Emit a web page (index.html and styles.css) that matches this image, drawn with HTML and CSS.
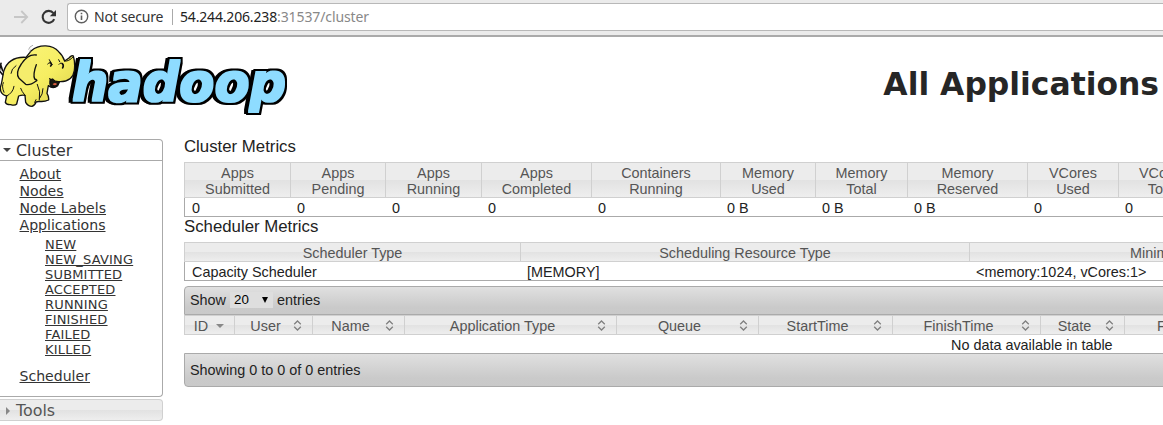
FILE: index.html
```html
<!DOCTYPE html>
<html lang="en">
<head>
<meta charset="utf-8">
<title>All Applications</title>
<link rel="stylesheet" href="styles.css">
</head>
<body>
<svg class="defs" width="0" height="0">
  <symbol id="sort" viewBox="0 0 9 11"><path d="M1.2 4.2 4.5 1 7.8 4.2M1.2 6.8 4.5 10 7.8 6.8" fill="none" stroke="#808080" stroke-width="1.3"/></symbol>
</svg>
<div class="browser">
  <svg class="forward" width="16" height="16" viewBox="0 0 16 16"><path d="M1 8H14M8.3 2 14.2 8 8.3 14" fill="none" stroke="#c6c6c6" stroke-width="1.8"/></svg>
  <svg class="reload" width="16" height="16" viewBox="0 0 16 16"><path d="M13.2 10.2A6 6 0 1 1 12.4 4.2" fill="none" stroke="#333" stroke-width="2.1"/><path d="M15 1V7.2H8.8Z" fill="#333"/></svg>
  <div class="address">
    <svg width="15" height="15" viewBox="0 0 15 15"><circle cx="7.5" cy="7.5" r="6.2" fill="none" stroke="#5f5f5f" stroke-width="1.4"/><path d="M7.5 6.4V11M7.5 3.7V5.3" stroke="#5f5f5f" stroke-width="1.6"/></svg>
    <span class="secure">Not secure</span>
    <span class="divider"></span>
    <span class="host">54.244.206.238</span><span class="path">:31537/cluster</span>
  </div>
</div>
<header class="banner">
  <svg class="logo" width="295" height="80" viewBox="0 0 295 80">
    <defs>
      <linearGradient id="skin" x1="0" y1="0" x2="1" y2="1"><stop offset="0" stop-color="#fbf580"/><stop offset=".55" stop-color="#f6ee62"/><stop offset="1" stop-color="#d8cc48"/></linearGradient>
      <filter id="block" x="-5%" y="-20%" width="110%" height="140%" color-interpolation-filters="sRGB">
        <feMorphology in="SourceGraphic" operator="dilate" radius="1" result="face"/>
        <feMorphology in="SourceAlpha" operator="dilate" radius="3" result="edge"/>
        <feMorphology in="SourceAlpha" operator="dilate" radius="2" result="inner"/>
        <feOffset in="inner" dx="-3" dy="0" result="side"/>
        <feMerge><feMergeNode in="side"/><feMergeNode in="edge"/><feMergeNode in="face"/></feMerge>
      </filter>
    </defs>
    <text class="word" x="72" y="62.5" textLength="214" lengthAdjust="spacingAndGlyphs">hadoop</text>
    <g transform="scale(.3333)" stroke="#111" stroke-width="4" stroke-linejoin="round" stroke-linecap="round">
      <path d="M78 58C42 56 20 72 11 100C7 120 6 135 1 148C0 162 8 171 20 174L16 193Q20 201 32 200Q45 204 50 198L56 174Q66 170 75 172L77 193Q84 205 96 205Q106 201 108 192L118 190Q132 192 146 186Q147 175 141 166L145 143Q160 154 173 143L178 131C204 132 220 119 223 98Q226 74 220 54Q216 50 207 60L194 69Q188 51 176 41C158 20 119 17 94 38Z" fill="url(#skin)"/>
      <path d="M109 51C89 48 75 61 64 78C53 94 47 108 57 121Q67 130 77 139C91 144 103 133 110 128Q113 126 104 123C98 110 105 91 109 80" fill="#f5ed6c"/>
      <path d="M149 122Q153 126 158 123Q163 132 178 131Q172 148 154 145Q147 137 151 124" fill="#1a1a10"/>
      <path d="M158 139Q165 131 171 138Q166 145 158 139" fill="#d95d42" stroke="none"/>
      <path d="M143 78Q151 69 157 80M177 79Q184 69 190 82M151 71 148 65M179 71 176 65M194 69Q206 72 220 56M75 172Q65 160 62 151M112 139Q123 160 118 186M129 152Q129 169 119 181M20 174Q39 165 42 145M33 106Q34 92 48 83M104 193 108 185M10 134Q4 145 12 163" fill="none" stroke-width="3"/>
      <path d="M187 77Q192 82 188 90M151 73Q157 79 152 84M3 76-2 98 8 110M2 80 8 98" fill="none" stroke-width="5"/>
      <path d="M86 34Q88 25 98 22M90 42 91 36" fill="none" stroke="#888" stroke-width="2"/>
    </g>
  </svg>
  <h1>All Applications</h1>
</header>
<main class="layout">
  <nav class="sidebar">
    <h3 class="section open"><i class="caret down"></i>Cluster</h3>
    <div class="links">
      <a>About</a><a>Nodes</a><a>Node Labels</a><a>Applications</a>
      <div class="states"><a>NEW</a><a>NEW_SAVING</a><a>SUBMITTED</a><a>ACCEPTED</a><a>RUNNING</a><a>FINISHED</a><a>FAILED</a><a>KILLED</a></div>
      <a>Scheduler</a>
    </div>
    <h3 class="section closed"><i class="caret right"></i>Tools</h3>
  </nav>
  <section class="content">
    <h2>Cluster Metrics</h2>
    <div class="grid metrics">
      <div class="th">Apps<br>Submitted</div><div class="th">Apps<br>Pending</div><div class="th">Apps<br>Running</div><div class="th">Apps<br>Completed</div><div class="th">Containers<br>Running</div><div class="th">Memory<br>Used</div><div class="th">Memory<br>Total</div><div class="th">Memory<br>Reserved</div><div class="th">VCores<br>Used</div><div class="th">VCores<br>Total</div>
      <div class="td">0</div><div class="td">0</div><div class="td">0</div><div class="td">0</div><div class="td">0</div><div class="td">0 B</div><div class="td">0 B</div><div class="td">0 B</div><div class="td">0</div><div class="td">0</div>
    </div>
    <h2>Scheduler Metrics</h2>
    <div class="grid scheduler">
      <div class="th">Scheduler Type</div><div class="th">Scheduling Resource Type</div><div class="th">Minimum Allocation</div>
      <div class="td">Capacity Scheduler</div><div class="td">[MEMORY]</div><div class="td">&lt;memory:1024, vCores:1&gt;</div>
    </div>
    <div class="toolbar top">Show <span class="select">20<i></i></span> entries</div>
    <div class="apps">
      <div class="th"><span>ID</span><i class="caret sorted"></i></div>
      <div class="th"><span>User</span><svg><use href="#sort"/></svg></div>
      <div class="th"><span>Name</span><svg><use href="#sort"/></svg></div>
      <div class="th"><span>Application Type</span><svg><use href="#sort"/></svg></div>
      <div class="th"><span>Queue</span><svg><use href="#sort"/></svg></div>
      <div class="th"><span>StartTime</span><svg><use href="#sort"/></svg></div>
      <div class="th"><span>FinishTime</span><svg><use href="#sort"/></svg></div>
      <div class="th"><span>State</span><svg><use href="#sort"/></svg></div>
      <div class="th"><span>FinalStatus</span><svg><use href="#sort"/></svg></div>
    </div>
    <div class="empty">No data available in table</div>
    <div class="toolbar bottom">Showing 0 to 0 of 0 entries</div>
  </section>
</main>
</body>
</html>
```

FILE: styles.css
```css
* { box-sizing: border-box; }
html, body { overflow: hidden; height: 425px; }
body { margin: 0; background: #fff; color: #222; font: 14.4px/16px "Liberation Sans", Arial, sans-serif; }
h1, h2, h3 { margin: 0; font-weight: normal; }
.defs { display: block; height: 0; }

.browser { display: flex; align-items: center; height: 37px; padding: 0 0 4px 13px; overflow: hidden; background: #ebebeb; border-bottom: 2px solid #aaa; }
.forward { flex: none; margin: 2px 12px 0 0; }
.reload { flex: none; margin: 2px 10px 0 0; }
.address { display: flex; flex: 1; align-items: center; height: 28px; margin-top: 2px; padding-left: 6px; background: #fff; border: 1px solid #b8b8b8; border-right: 0; border-radius: 3px 0 0 3px; font: 14px/20px "Noto Sans", sans-serif; white-space: nowrap; }
.secure { width: 69px; margin-left: 5px; letter-spacing: -.2px; color: #333; }
.divider { width: 1px; height: 16px; margin: 0 7px 0 9px; background: #aaa; }
.host { width: 97px; color: #222; letter-spacing: -.17px; }
.path { color: #888; letter-spacing: -.1px; }

.banner { display: flex; justify-content: space-between; height: 102px; padding: 1px 4px 0 0; }
.banner h1 { margin-top: 26px; color: #262626; font: bold 31.4px/40px "DejaVu Sans", sans-serif; white-space: nowrap; }
.word { font: italic bold 53px "DejaVu Sans", sans-serif; fill: #8edcff; filter: url(#block); }

.layout { display: flex; overflow: hidden; }
.sidebar { flex: none; width: 163px; margin-right: 21px; color: #333; font: 14.08px/17px "DejaVu Sans", sans-serif; }
.section { display: flex; align-items: center; height: 22px; padding-top: 1px; border: 1px solid #aaa; border-left: 0; font: 15.9px/20px "DejaVu Sans", sans-serif; }
.open { border-radius: 0 4px 0 0; }
.closed { height: 22px; margin-top: 2px; color: #555; border-color: #d0d0d0; border-radius: 0 4px 4px 0; background: linear-gradient(#ececec 50%, #e2e2e2 51%, #eee); }
.links { display: flex; flex-direction: column; align-items: flex-start; height: 236px; padding: 5px 0 0 19.5px; border: 1px solid #aaa; border-width: 0 1px 1px 0; border-radius: 0 0 4px 0; }
.links a { text-decoration: underline; }
.states { display: flex; flex-direction: column; align-items: flex-start; margin: 3px 0 11px 25.5px; font-size: 13px; line-height: 15px; letter-spacing: .18px; }
.caret { flex: none; width: 0; height: 0; border: 4px solid transparent; }
.down { margin: 3px 5px 0 3px; border-top-color: #444; }
.right { margin: 0 2px 0 6px; border-left-color: #888; }

.content { flex: none; width: 1240px; }
.content h2 { height: 23px; font-size: 16.8px; line-height: 16px; }
.content .grid + h2 { height: 25px; padding-top: 2px; }
.grid { display: grid; border: 1px solid #aaa; border-top: 0; }
.metrics { grid-template-columns: 106px 95px 96px 110px 129px 95px 92px 120px 91px 211px; }
.scheduler { grid-template-columns: 336px 449px 453px; }
.th { color: #555; text-align: center; border: 1px solid #d0d0d0; border-right: 0; background: linear-gradient(#ececec 50%, #e2e2e2 51%, #eee); white-space: nowrap; }
.grid .th { margin-left: -1px; padding: 2px 1px 0 0; }
.metrics .th:nth-child(10) { padding-right: 123px; }
.scheduler .th:nth-child(3) { padding-right: 9px; }
.td { height: 18px; padding: 2px 7px 0 6px; }
.grid .td:nth-child(11), .scheduler .td:nth-child(4) { padding-left: 7px; }

.toolbar { display: flex; align-items: center; border: 1px solid #aaa; background: linear-gradient(#e0e0e0, #cacaca 75%, #c9c9c9); padding-left: 5px; }
.top { height: 29px; margin-top: 5px; padding-bottom: 2px; border-radius: 4px 0 0; }
.bottom { height: 34px; border-radius: 0 0 0 4px; }
.select { display: flex; align-items: center; justify-content: space-between; width: 43px; height: 16px; margin: 1px 4px 0; padding: 0 5px 0 4px; background: #dedede; color: #000; font-size: 13.33px; }
.select i { border: 3.5px solid transparent; border-top: 6px solid #000; border-bottom: 0; }
.apps { display: grid; grid-template-columns: 50px 78px 92px 212px 142px 134px 148px 84px 300px; }
.apps .th { display: flex; align-items: center; height: 20px; padding: 1px 10px 0 9px; }
.apps .th span { flex: 1; margin-left: -6px; }
.apps .th:first-child span { margin-left: -8px; }
.apps .th svg { flex: none; width: 9px; height: 11px; }
.apps .th:last-child { text-align: left; padding-left: 38px; }
.sorted { margin-top: 4px; border-top-color: #888; }
.empty { height: 18px; padding: 2px 0 0 767px; }
```
